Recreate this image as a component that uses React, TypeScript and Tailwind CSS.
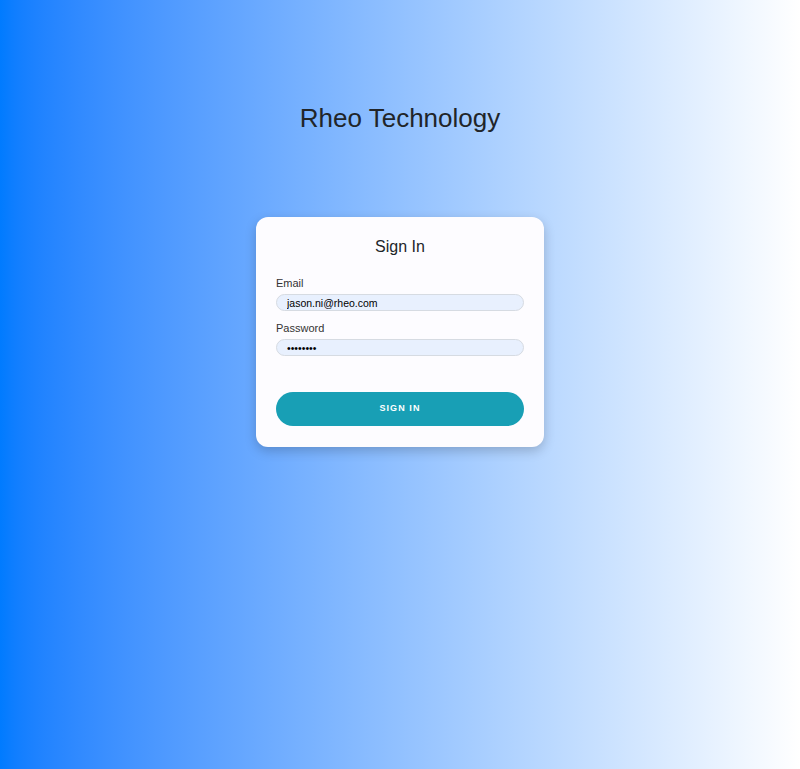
export default function App() {
  return (
    <div className="min-h-screen w-full bg-gradient-to-r from-[#007bff] to-[#ffffff] font-['Liberation_Sans',Arial,sans-serif] text-[#212529]">
      <div className="flex flex-col items-center pt-[99px]">
        <h1 className="text-[26px] leading-[38px] font-normal">Rheo Technology</h1>

        <div className="mt-[80px] w-[288px] rounded-xl bg-[#fdfcff] px-5 pt-[20px] pb-[21px] shadow-[0_4px_12px_rgba(0,0,0,0.2)]">
          <h2 className="text-center text-[16px] leading-[20px]">Sign In</h2>

          <form className="mt-[19px] flex flex-col">
            <label className="text-[11px] leading-[14px] text-[#333]">Email</label>
            <input
              type="email"
              defaultValue="jason.ni@rheo.com"
              className="mt-[4px] h-[17px] w-full rounded-full border border-[#d6dbe2] bg-[#e8f0fe] px-[10px] text-[10.5px] leading-[15px] text-black outline-none"
            />
            <label className="mt-[10px] text-[11px] leading-[14px] text-[#333]">Password</label>
            <input
              type="password"
              defaultValue="password"
              className="mt-[4px] h-[17px] w-full rounded-full border border-[#d6dbe2] bg-[#e8f0fe] px-[10px] text-[10.5px] leading-[15px] text-black outline-none"
            />
            <button
              type="button"
              className="mt-[36px] h-[34px] w-full rounded-full bg-[#189fb5] text-[9px] font-bold uppercase tracking-[0.12em] text-white"
            >
              Sign In
            </button>
          </form>
        </div>
      </div>
    </div>
  )
}
